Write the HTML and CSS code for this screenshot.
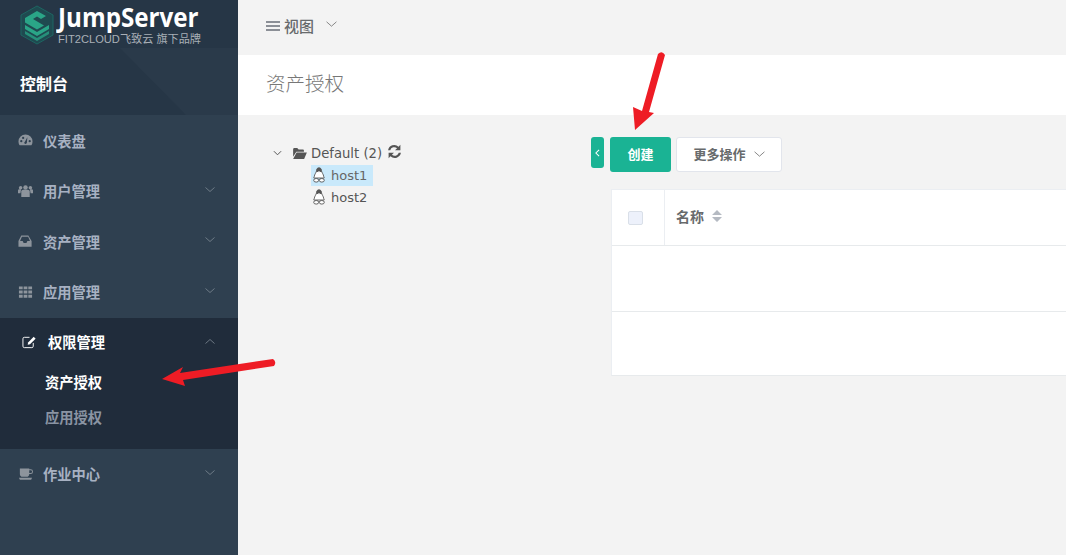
FILE: index.html
```html
<!DOCTYPE html>
<html lang="zh">
<head>
<meta charset="utf-8">
<title>资产授权</title>
<link rel="stylesheet" href="styles.css">
</head>
<body>
<div class="app">
  <aside class="sidebar">
    <div class="brand">
      <svg class="corner" viewBox="0 0 238 115" width="238" height="115"><path d="M120 48 L238 48 L238 115 L186 115 Z" fill="#2a3a4a"/></svg>
      <div class="logo">
        <svg class="logo-mark" viewBox="0 0 34 40" width="34" height="40">
          <path d="M17 1 L33 10 L33 30 L17 39 L1 30 L1 10 Z" fill="#1f4a50" stroke="#1d6662" stroke-width="1"/>
          <path d="M5 13 L17 6 L26 11 L21 14 L17 11.5 L13 14 L24 20.5 L17 24.5 L5 17.5 Z" fill="#2aa587"/>
          <path d="M5 20 L17 27 L29 20 L29 24 L17 31 L5 24 Z" fill="#2aa587"/>
          <path d="M5 26 L17 33 L29 26 L29 29 L17 36 L5 29 Z" fill="#26907a"/>
        </svg>
        <div class="logo-text">
          <div class="logo-name">JumpServer</div>
          <div class="logo-sub">FIT2CLOUD飞致云 旗下品牌</div>
        </div>
      </div>
      <div class="console">控制台</div>
    </div>
    <nav class="nav">
      <div class="nav-item">
        <svg class="ico" viewBox="0 0 16 14"><path d="M8 1a7.500 7.500 0 0 0-7.500 7.500c0 1.500.4 2.700 1 3.800.2.300.5.400.8.400h11.400c.3 0 .6-.1.800-.4.600-1.100 1-2.300 1-3.800A7.500 7.500 0 0 0 8 1zM3.500 9.500a1.200 1.200 0 1 1 0-2.400 1.200 1.200 0 0 1 0 2.400zm2-3.500a1.200 1.200 0 1 1 0-2.400 1.200 1.200 0 0 1 0 2.400zm3.700 4.500a1.500 1.500 0 0 1-2.400 0c-.3-.5 0-1.100.4-1.400L10 4l-.5 5.300c0 .4 0 .8-.3 1.200zM12.500 9.500a1.200 1.200 0 1 1 0-2.400 1.200 1.200 0 0 1 0 2.400z" fill="#8d949c" fill-rule="evenodd"/></svg>
        <span>仪表盘</span>
      </div>
      <div class="nav-item">
        <svg class="ico" viewBox="0 0 16 14"><g fill="#8d949c"><circle cx="8" cy="3.200" r="2.400"/><circle cx="2.800" cy="3.500" r="1.900"/><circle cx="13.200" cy="3.500" r="1.900"/><path d="M3.500 7.500c0-1 1-1.800 2-1.800h5c1 0 2 .8 2 1.800V13.500H3.500z"/><path d="M0 6.500c0-.8.800-1.300 1.500-1.300h1.800L2.600 9.500H0zM16 6.500c0-.8-.8-1.300-1.500-1.300h-1.800l.7 4.300H16z"/></g></svg>
        <span>用户管理</span>
        <svg class="chev" viewBox="0 0 10 5"><path d="M.5.500 5 4.500 9.500.500" fill="none" stroke="#7f8a96" stroke-width=".8"/></svg>
      </div>
      <div class="nav-item">
        <svg class="ico" viewBox="0 0 16 14"><path d="M3.500 1h7.500l3.500 6v6H.500V7zM4.200 2.500 2.200 7H5l1 2h3l1-2h2.800l-2-4.500z" fill="#8d949c" fill-rule="evenodd"/></svg>
        <span>资产管理</span>
        <svg class="chev" viewBox="0 0 10 5"><path d="M.5.500 5 4.500 9.500.500" fill="none" stroke="#7f8a96" stroke-width=".8"/></svg>
      </div>
      <div class="nav-item">
        <svg class="ico" viewBox="0 0 16 14"><path d="M1 1h4v3H1zM6 1h4v3H6zM11 1h4v3h-4zM1 5.500h4v3H1zM6 5.500h4v3H6zM11 5.500h4v3h-4zM1 10h4v3H1zM6 10h4v3H6zM11 10h4v3h-4z" fill="#8d949c"/></svg>
        <span>应用管理</span>
        <svg class="chev" viewBox="0 0 10 5"><path d="M.5.500 5 4.500 9.500.500" fill="none" stroke="#7f8a96" stroke-width=".8"/></svg>
      </div>
      <div class="nav-group">
        <div class="nav-item nav-item-open">
          <svg class="ico" viewBox="0 0 16 14"><path d="M12 8v3.500A1.500 1.500 0 0 1 10.500 13h-8A1.500 1.500 0 0 1 1 11.500v-8A1.500 1.500 0 0 1 2.500 2H8" fill="none" stroke="#fff" stroke-width="1"/><path d="M6.500 7.500 12.500 1.500l2 2-6 6-2.400.5z" fill="#fff"/></svg>
          <span>权限管理</span>
          <svg class="chev" viewBox="0 0 10 5"><path d="M.5 4.500 5 .500 9.500 4.500" fill="none" stroke="#7f8a96" stroke-width=".8"/></svg>
        </div>
        <div class="sub-item sub-item-active">资产授权</div>
        <div class="sub-item">应用授权</div>
      </div>
      <div class="nav-item nav-item-last">
        <svg class="ico" viewBox="0 0 16 14"><path d="M2 1h10v1h1.500A2.500 2.500 0 0 1 13.500 7H12a3 3 0 0 1-3 3H5a3 3 0 0 1-3-3zM12 3v3h1.500a1.500 1.500 0 0 0 0-3zM1 11h14l-1 2H2z" fill="#8d949c" fill-rule="evenodd"/></svg>
        <span>作业中心</span>
        <svg class="chev" viewBox="0 0 10 5"><path d="M.5.500 5 4.500 9.500.500" fill="none" stroke="#7f8a96" stroke-width=".8"/></svg>
      </div>
    </nav>
  </aside>
  <main class="main">
    <header class="topbar">
      <svg class="menu-ico" viewBox="0 0 14 12" width="14" height="12"><path d="M0 1h14v2H0zM0 5h14v2H0zM0 9h14v2H0z" fill="#8b8f96"/></svg>
      <span class="view-label">视图</span>
      <svg class="view-chev" viewBox="0 0 10 5" width="11" height="6"><path d="M.5.500 5 4.500 9.500.500" fill="none" stroke="#777" stroke-width=".8"/></svg>
    </header>
    <div class="title-bar"><h1>资产授权</h1></div>
    <div class="content">
      <section class="tree">
        <div class="tree-row tree-root">
          <svg class="tree-chev" viewBox="0 0 10 6" width="9" height="6"><path d="M1 1l4 4 4-4" fill="none" stroke="#555" stroke-width="1.100"/></svg>
          <svg class="folder" viewBox="0 0 15 12" width="14" height="11"><path d="M0 1.500C0 .700.600 0 1.300 0h3.200l1.500 1.500h4.500c.7 0 1.300.6 1.300 1.300V4H3.500L0 9.500zM3.800 5H15l-3 7H0z" fill="#555"/></svg>
          <span class="tree-label">Default (2)</span>
          <svg class="refresh" viewBox="0 0 14 14" width="15" height="15"><path d="M12.500 .800v5H7.500l1.900-1.900A4 4 0 0 0 3 5.800H1A5.900 5.900 0 0 1 10.800 2.500zM1.500 13.200v-5H6.500L4.600 10.100A4 4 0 0 0 11 8.200h2A5.900 5.900 0 0 1 3.200 11.500z" fill="#555"/></svg>
        </div>
        <div class="tree-row tree-leaf">
          <span class="leaf-box leaf-selected">
            <svg class="penguin" viewBox="0 0 14 16" width="14" height="16"><path d="M7 .8c1.700 0 2.500 1.300 2.500 3 0 1.500 2 3.300 2.300 6 .3.400.4.800.4 1.200H1.800c0-.4.100-.8.400-1.200.3-2.700 2.300-4.500 2.300-6C4.500 2.100 5.300.8 7 .8z" fill="#fff" stroke="#444" stroke-width=".8"/><path d="M7 .8c1.700 0 2.500 1.300 2.500 3l.2 1.200L8.300 5H5.700L4.300 5l.2-1.200C4.500 2.100 5.300.8 7 .8z" fill="#555"/><path d="M5.600 4.300h2.800L7 5.700z" fill="#ddd"/><ellipse cx="4.200" cy="13.300" rx="2.500" ry="1.800" fill="#fff" stroke="#444" stroke-width=".8"/><ellipse cx="9.800" cy="13.300" rx="2.500" ry="1.800" fill="#fff" stroke="#444" stroke-width=".8"/></svg>
            <span>host1</span>
          </span>
        </div>
        <div class="tree-row tree-leaf">
          <span class="leaf-box">
            <svg class="penguin" viewBox="0 0 14 16" width="14" height="16"><path d="M7 .8c1.700 0 2.500 1.300 2.500 3 0 1.500 2 3.300 2.300 6 .3.400.4.800.4 1.200H1.800c0-.4.100-.8.400-1.200.3-2.700 2.300-4.500 2.300-6C4.500 2.100 5.300.8 7 .8z" fill="#fff" stroke="#444" stroke-width=".8"/><path d="M7 .8c1.700 0 2.500 1.300 2.500 3l.2 1.200L8.300 5H5.700L4.300 5l.2-1.200C4.500 2.100 5.300.8 7 .8z" fill="#555"/><path d="M5.600 4.300h2.800L7 5.700z" fill="#ddd"/><ellipse cx="4.200" cy="13.300" rx="2.500" ry="1.800" fill="#fff" stroke="#444" stroke-width=".8"/><ellipse cx="9.800" cy="13.300" rx="2.500" ry="1.800" fill="#fff" stroke="#444" stroke-width=".8"/></svg>
            <span>host2</span>
          </span>
        </div>
      </section>
      <button class="collapse" type="button"><svg viewBox="0 0 6 10" width="5" height="8"><path d="M5 1 1 5l4 4" fill="none" stroke="#fff" stroke-width="1.300"/></svg></button>
      <section class="panel">
        <div class="toolbar">
          <button class="btn btn-primary" type="button">创建</button>
          <button class="btn btn-default" type="button">更多操作<svg class="btn-chev" viewBox="0 0 10 5" width="11" height="6"><path d="M.5.500 5 4.500 9.500.500" fill="none" stroke="#777" stroke-width=".8"/></svg></button>
        </div>
        <div class="table">
          <div class="table-head">
            <div class="cell-check"><span class="checkbox"></span></div>
            <div class="cell-name"><span>名称</span><svg class="sort" viewBox="0 0 10 12" width="10" height="12"><path d="M5 0l5 5H0zM5 12l5-5H0z" fill="#b5bac2"/></svg></div>
          </div>
          <div class="table-row"></div>
          <div class="table-row table-row-short"></div>
        </div>
      </section>
    </div>
  </main>
</div>
<svg class="arrow arrow-side" viewBox="0 0 115 40" width="115" height="40"><path d="M1 21 L22 9 L19 15 L112 1 Q116 4 113 8 L22 22 L24 28 Z" fill="#ee1c25"/></svg>
<svg class="arrow arrow-top" viewBox="0 0 40 82" width="40" height="82"><path d="M5 80 L3 57 L12 61 L28 4 Q32 0 35 5 L19 62 L24 63 Z" fill="#ee1c25"/></svg>
</body>
</html>
```

FILE: styles.css
```css
* { box-sizing: border-box; }
html, body { margin: 0; padding: 0; height: 100%; overflow: hidden; }
body {
  font-family: "Open Sans", "Noto Sans CJK SC", sans-serif;
  background: #f3f3f3;
  color: #676a6c;
  font-size: 13px;
  position: relative;
}
.app { display: flex; width: 1066px; height: 555px; }

.sidebar { width: 238px; flex: none; background: #2f4050; display: flex; flex-direction: column; }
.brand { height: 115px; background: #263646; position: relative; overflow: hidden; padding: 4px 0 0 20px; }
.corner { position: absolute; left: 0; top: 0; }
.logo { display: flex; gap: 4px; position: relative; height: 45px; }
.logo-mark { flex: none; margin-top: 1px; }
.logo-text { color: #fff; }
.logo-name { font-family: "Open Sans", sans-serif; font-weight: 700; font-size: 26px; line-height: 28px; margin-top: -1px; transform: scaleX(.93); transform-origin: left; white-space: nowrap; }
.logo-sub { font-family: "Liberation Sans", "Noto Sans CJK SC", sans-serif; font-size: 11.150px; line-height: 13px; margin-top: 2px; color: #a9b0b7; white-space: nowrap; }
.console { position: relative; color: #fff; font-weight: 700; font-size: 16px; line-height: 22px; margin-top: 24px; }

.nav-item { height: 50.500px; display: flex; align-items: center; padding-left: 18px; color: #a7b1c2; font-weight: 700; font-size: 14.250px; position: relative; }
.nav-item .ico { width: 15px; height: 14px; margin-right: 10px; flex: none; }
.chev { position: absolute; left: 205px; top: 21px; width: 10px; height: 5px; }
.nav-group { background: #202c3b; height: 131px; margin-top: 1px; }
.nav-item-open { height: 47px; color: #fff; padding-left: 22px; }
.nav-item-open .ico { margin-right: 11px; }
.nav-item-last { padding-bottom: 1px; }
.sub-item { height: 35px; line-height: 35px; padding-left: 45px; font-size: 14.250px; font-weight: 700; color: #8a94a3; }
.sub-item-active { color: #fff; }

.main { flex: 1; min-width: 0; display: flex; flex-direction: column; }
.topbar { height: 55px; display: flex; align-items: center; padding: 0 0 4px 28px; }
.menu-ico { margin-right: 4px; }
.view-label { font-size: 15px; color: #676a6c; margin-right: 12px; font-weight: 500; }
.view-chev { margin-top: -4px; }
.title-bar { height: 60px; background: #fff; display: flex; align-items: center; padding: 0 0 5px 28px; }
.title-bar h1 { margin: 0; font-size: 19.500px; font-weight: 300; color: #777; }

.content { flex: 1; display: flex; align-items: flex-start; padding-top: 22px; }
.tree { width: 353px; flex: none; padding: 5px 0 0 35px; }
.tree-row { display: flex; align-items: center; height: 22px; }
.tree-root { color: #555; }
.tree-chev { margin-right: 11px; }
.folder { margin-right: 4px; }
.tree-label { font-family: "DejaVu Sans", sans-serif; font-size: 13.200px; color: #555; margin-right: 5px; }
.refresh { margin-top: -4px; }
.tree-leaf { padding-left: 38px; }
.leaf-box { display: inline-flex; align-items: center; gap: 5px; height: 21px; padding: 0 6px 0 0; font-family: "DejaVu Sans", sans-serif; font-size: 13px; color: #555; }
.leaf-selected { background: #c9e9fb; color: #666; }
.penguin { margin-left: 1px; }

.collapse { width: 13px; height: 31px; margin: 0 6px 0 0; padding: 0; border: 0; border-radius: 3px; background: #1ab394; display: flex; align-items: center; justify-content: center; flex: none; }
.panel { flex: 1; min-width: 0; }
.toolbar { display: flex; gap: 5px; height: 35px; }
.btn { height: 35px; border-radius: 3px; font-family: "Open Sans", "Noto Sans CJK SC", sans-serif; font-size: 13px; font-weight: 700; padding: 0 0 2px; }
.btn-primary { width: 61px; border: 0; background: #1ab394; color: #fff; }
.btn-default { width: 106px; border: 1px solid #e2e5ec; background: #fff; color: #676a6c; display: flex; align-items: center; justify-content: center; gap: 8px; }
.table { margin: 17px 0 0 1px; background: #fff; border-top: 1px solid #ebeef2; border-left: 1px solid #ebeef2; border-bottom: 1px solid #e7eaec; height: 187px; }
.table-head { display: flex; height: 56px; border-bottom: 1px solid #e7eaec; }
.cell-check { width: 53px; border-right: 1px solid #ebeef2; display: flex; align-items: center; padding-left: 16px; }
.checkbox { width: 15px; height: 14px; background: #edf1fb; border: 1px solid #d9dfe8; border-radius: 2px; margin-top: 1px; }
.cell-name { display: flex; align-items: center; gap: 8px; padding: 0 0 4px 11px; font-size: 14px; font-weight: 700; color: #676a6c; }
.table-row { height: 66px; border-bottom: 1px solid #e7eaec; }
.table-row-short { height: 63px; border-bottom: 0; }

.arrow { position: absolute; }
.arrow-side { left: 161px; top: 358px; }
.arrow-top { left: 630px; top: 50px; }
```
